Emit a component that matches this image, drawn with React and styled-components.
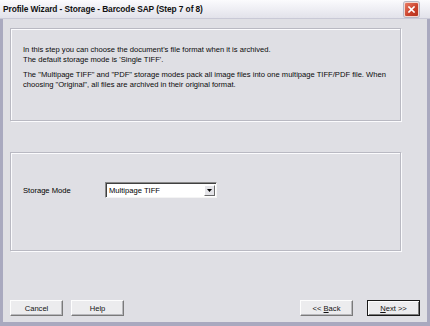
import React from "react";
import styled, { createGlobalStyle } from "styled-components";

const Global = createGlobalStyle`
  html, body { margin: 0; padding: 0; background: #dfdfe3; }
  body { width: 430px; height: 326px; overflow: hidden; }
`;

const Frame = styled.div`
  width: 430px;
  height: 326px;
  box-sizing: border-box;
  border-left: 3px solid #a9a9bf;
  border-right: 3px solid #a9a9bf;
  border-bottom: 4px solid #a9a9bf;
  background: #dfdfe4;
  display: flex;
  flex-direction: column;
  font-family: "Liberation Sans", Arial, sans-serif;
  color: #000;
`;

const TitleBar = styled.div`
  height: 18px;
  margin: 0 -3px;
  padding: 0 11px 0 3px;
  display: flex;
  align-items: center;
  justify-content: space-between;
  background: linear-gradient(#fbfbfd, #ececf2 60%, #e2e2ea);
  border-bottom: 1px solid #c9c9d6;
`;

const Title = styled.span`
  font-family: "Liberation Sans", Arial, sans-serif;
  font-weight: bold;
  font-size: 8.4px;
  letter-spacing: -0.1px;
  color: #111;
`;

const CloseBtn = styled.div`
  width: 13px;
  height: 13px;
  border-radius: 2px;
  border: 1px solid #f2d6cf;
  background: linear-gradient(135deg, #e87a63, #c9402a 60%, #b5321e);
  display: flex;
  align-items: center;
  justify-content: center;
  box-shadow: 0 0 0 1px #b7b7c4;
`;

const Body = styled.div`
  flex: 1;
  display: flex;
  flex-direction: column;
  padding: 9px 7px 6px 7px;
`;

const Group = styled.div`
  height: ${(p) => p.$h}px;
  margin-top: ${(p) => p.$mt}px;
  margin-right: 19px;
  box-sizing: border-box;
  border: 1px solid #b9b9c2;
  box-shadow: inset 1px 1px 0 #fbfbfd, 1px 1px 0 #fbfbfd;
  padding: ${(p) => p.$pad};
`;

const Para = styled.p`
  margin: 0 0 5px 0;
  font-size: 7.6px;
  line-height: 10px;
  color: #0a0a0a;
`;

const Row = styled.div`
  display: flex;
  align-items: center;
`;

const Label = styled.span`
  font-size: 7.6px;
  width: 82px;
`;

const Select = styled.div`
  width: 112px;
  height: 16px;
  box-sizing: border-box;
  background: #fff;
  border: 1px solid;
  border-color: #8a8a8a #f4f4f4 #f4f4f4 #8a8a8a;
  box-shadow: inset 1px 1px 0 #404040;
  display: flex;
  align-items: center;
  justify-content: space-between;
  padding: 0 1px 0 3px;
  font-size: 7.6px;
`;

const Arrow = styled.div`
  width: 11px;
  height: 11px;
  box-sizing: border-box;
  background: #e4e4e8;
  border: 1px solid;
  border-color: #fff #6a6a6a #6a6a6a #fff;
  display: flex;
  align-items: center;
  justify-content: center;
`;

const Footer = styled.div`
  margin-top: auto;
  display: flex;
  justify-content: space-between;
`;

const BtnGroup = styled.div`
  display: flex;
  gap: ${(p) => p.$gap}px;
`;

const Button = styled.div`
  width: 53px;
  height: 16px;
  box-sizing: border-box;
  background: #ececee;
  border: 1px solid;
  border-color: ${(p) => (p.$default ? "#1a1a1a" : "#fdfdfd #7a7a7a #7a7a7a #fdfdfd")};
  box-shadow: ${(p) =>
    p.$default
      ? "inset 1px 1px 0 #fdfdfd, inset -1px -1px 0 #7a7a7a"
      : "inset -1px -1px 0 #b8b8bc"};
  display: flex;
  align-items: center;
  justify-content: center;
  font-size: 7.6px;
  color: #111;
  white-space: pre;
  u { text-decoration: underline; }
`;

export default function App() {
  return (
    <>
      <Global />
      <Frame>
        <TitleBar>
          <Title>Profile Wizard - Storage - Barcode SAP (Step 7 of 8)</Title>
          <CloseBtn>
            <svg width="7" height="7" viewBox="0 0 7 7">
              <path d="M1 1 L6 6 M6 1 L1 6" stroke="#fff" strokeWidth="1.6" strokeLinecap="square" />
            </svg>
          </CloseBtn>
        </TitleBar>
        <Body>
          <Group $h={93} $mt={0} $pad="16px 12px 0 12px">
            <Para>
              In this step you can choose the document's file format when it is archived.
              <br />
              The default storage mode is 'Single TIFF'.
            </Para>
            <Para>
              The "Multipage TIFF" and "PDF" storage modes pack all image files into one multipage TIFF/PDF file. When
              choosing "Original", all files are archived in their original format.
            </Para>
          </Group>
          <Group $h={99} $mt={31} $pad="29px 12px 0 12px">
            <Row>
              <Label>Storage Mode</Label>
              <Select>
                <span>Multipage TIFF</span>
                <Arrow>
                  <svg width="5" height="3" viewBox="0 0 5 3">
                    <path d="M0 0 H5 L2.5 3 Z" fill="#000" />
                  </svg>
                </Arrow>
              </Select>
            </Row>
          </Group>
          <Footer>
            <BtnGroup $gap={8}>
              <Button>Cancel</Button>
              <Button>Help</Button>
            </BtnGroup>
            <BtnGroup $gap={14}>
              <Button>
                <span>&lt;&lt; <u>B</u>ack</span>
              </Button>
              <Button $default>
                <span><u>N</u>ext &gt;&gt;</span>
              </Button>
            </BtnGroup>
          </Footer>
        </Body>
      </Frame>
    </>
  );
}
